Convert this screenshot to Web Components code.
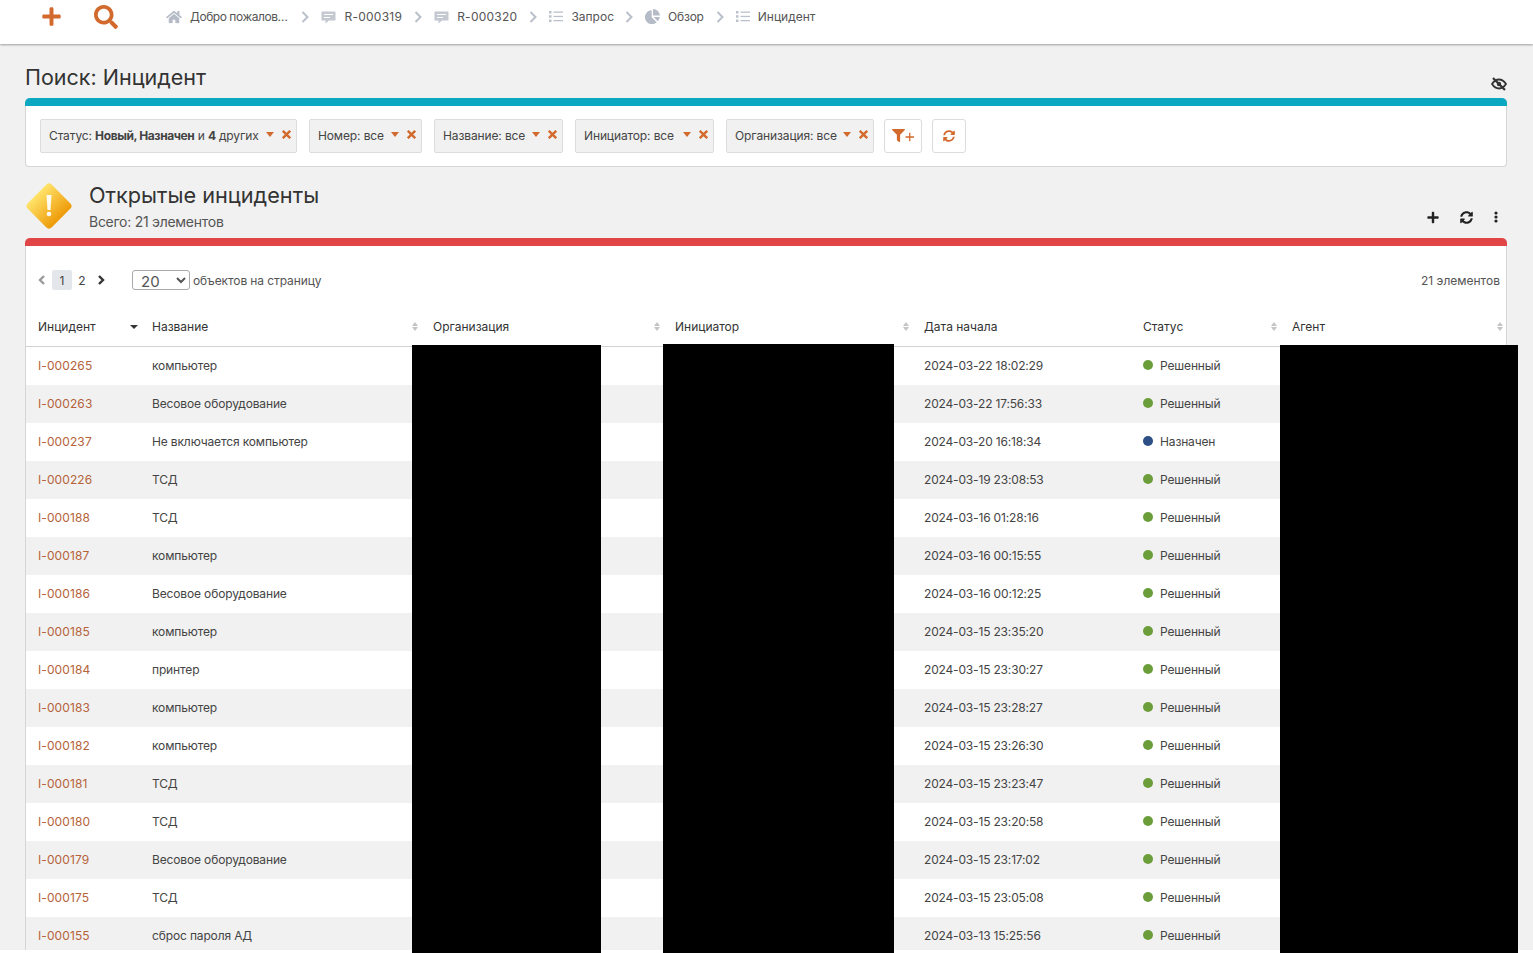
<!DOCTYPE html>
<html lang="ru"><head><meta charset="utf-8"><title>Поиск: Инцидент</title>
<style>
html,body{margin:0;padding:0;background:#fff;height:953px;overflow:hidden}
body{font-family:"Inter","Noto Sans",sans-serif;color:#3c3c3c}
</style></head><body>
<x-app></x-app>
<script>
const ORANGE='#d2692d';
const P={
plus:'<path d="M416 208H272V64c0-17.67-14.33-32-32-32h-32c-17.67 0-32 14.33-32 32v144H32c-17.67 0-32 14.33-32 32v32c0 17.67 14.33 32 32 32h144v144c0 17.67 14.33 32 32 32h32c17.67 0 32-14.33 32-32V304h144c17.67 0 32-14.33 32-32v-32c0-17.67-14.33-32-32-32z"/>',
search:'<path d="M505 442.7L405.3 343c-4.5-4.5-10.6-7-17-7H372c27.6-35.3 44-79.7 44-128C416 93.1 322.9 0 208 0S0 93.1 0 208s93.1 208 208 208c48.3 0 92.7-16.4 128-44v16.3c0 6.4 2.5 12.5 7 17l99.7 99.7c9.4 9.4 24.6 9.4 33.9 0l28.3-28.3c9.4-9.4 9.4-24.6.1-34zM208 336c-70.7 0-128-57.2-128-128 0-70.7 57.2-128 128-128 70.7 0 128 57.2 128 128 0 70.7-57.2 128-128 128z"/>',
home:'<path d="M280.37 148.26L96 300.11V464a16 16 0 0 0 16 16l112.06-.29a16 16 0 0 0 15.92-16V368a16 16 0 0 1 16-16h64a16 16 0 0 1 16 16v95.64a16 16 0 0 0 16 16.05L464 480a16 16 0 0 0 16-16V300L295.67 148.26a12.19 12.19 0 0 0-15.3 0zM571.6 251.47L488 182.56V44.05a12 12 0 0 0-12-12h-56a12 12 0 0 0-12 12v72.61L318.47 43a48 48 0 0 0-61 0L4.34 251.47a12 12 0 0 0-1.6 16.9l25.5 31A12 12 0 0 0 45.15 301l235.22-193.74a12.19 12.19 0 0 1 15.3 0L530.9 301a12 12 0 0 0 16.9-1.6l25.5-31a12 12 0 0 0-1.7-16.93z"/>',
sync:'<path d="M370.72 133.28C339.458 104.008 298.888 87.962 255.848 88c-77.458.068-144.328 53.178-162.791 126.85-1.344 5.363-6.122 9.15-11.651 9.15H24.103c-7.498 0-13.194-6.807-11.807-14.176C33.933 94.924 134.813 8 256 8c66.448 0 126.791 26.136 171.315 68.685L463.03 40.97C478.149 25.851 504 36.559 504 57.941V192c0 13.255-10.745 24-24 24H345.941c-21.382 0-32.09-25.851-16.971-40.971l41.75-41.749zM32 296h134.059c21.382 0 32.09 25.851 16.971 40.971l-41.75 41.75c31.262 29.273 71.835 45.319 114.876 45.28 77.418-.07 144.315-53.144 162.787-126.849 1.344-5.363 6.122-9.15 11.651-9.15h57.304c7.498 0 13.194 6.807 11.807 14.176C478.067 417.076 377.187 504 256 504c-66.448 0-126.791-26.136-171.315-68.685L48.97 471.03C33.851 486.149 8 475.441 8 454.059V320c0-13.255 10.745-24 24-24z"/>',
filter:'<path d="M487.976 0H24.028C2.71 0-8.047 25.866 7.058 40.971L192 225.941V432c0 7.831 3.821 15.17 10.237 19.662l80 55.98C298.02 518.69 320 507.493 320 487.98V225.941l184.947-184.97C520.021 25.896 509.338 0 487.976 0z"/>',
};
function ic(name,w,h,color,vb){return `<svg width="${w}" height="${h}" viewBox="${vb||'0 0 512 512'}" fill="${color}" style="display:block;flex:none">${P[name]}</svg>`}
const chev=`<svg width="8" height="12" viewBox="0 0 8 12" fill="none" stroke="#b9c0cb" stroke-width="2" style="display:block;flex:none"><path d="M1.5 1l5 5-5 5"/></svg>`;
const ICONS={
home:`<svg width="16" height="14" viewBox="0 0 576 512" fill="#b6bcc7" style="display:block">${P.home}</svg>`,
comment:`<svg width="15" height="14" viewBox="0 0 15 14" style="display:block"><path fill="#c3c8d1" d="M1 1.500h13a.5.5 0 0 1 .5.5v8a.5.5 0 0 1-.5.5H8L4.500 13.500v-3H1a.5.5 0 0 1-.5-.5V2a.5.5 0 0 1 .5-.5z"/><path stroke="#fff" stroke-width="1" d="M3 4.500h9M3 7.500h6"/></svg>`,
list:`<svg width="14" height="13" viewBox="0 0 14 13" style="display:block" fill="#bcc2cc"><rect x="0" y="1" width="2.500" height="2.500"/><rect x="0" y="5.200" width="2.500" height="2.500"/><rect x="0" y="9.500" width="2.500" height="2.500"/><rect x="4.500" y="1.500" width="9.500" height="1.300"/><rect x="4.500" y="5.800" width="9.500" height="1.300"/><rect x="4.500" y="10" width="9.500" height="1.300"/></svg>`,
pie:`<svg width="15" height="15" viewBox="0 0 15 15" style="display:block" fill="#b6bcc7"><path d="M6.700 1.200v7.100l5 5A7 7 0 1 1 6.700 1.200z"/><path d="M8 0a7 7 0 0 1 7 6.600H8z"/><path d="M8.600 8h6.300a7 7 0 0 1-2.200 4.200z"/></svg>`
};
function def(name,css,html){
 customElements.define(name,class extends HTMLElement{
  constructor(){super();const r=this.attachShadow({mode:'open'});r.innerHTML=`<style>${css}</style>`+(typeof html==='function'?html(this):html);}
 });
}
def('x-crumb',`:host{display:flex;align-items:center;gap:8px;font-size:12px;color:#555}
.i{display:flex;align-items:center;justify-content:center}`,
 el=>`<span class="i">${ICONS[el.getAttribute('icon')]}</span><slot></slot>`);
def('x-topbar',`:host{display:flex;align-items:center;height:44px;background:#fff;box-shadow:0 1px 2px rgba(0,0,0,.35);position:relative;z-index:1;box-sizing:border-box;padding:0 0 11px 41px}
.add{margin-right:32px}.find{margin-right:48px}
nav{display:flex;align-items:center}
.sep{margin:0 12px}
.w{letter-spacing:-.45px;margin-right:2px}.d{letter-spacing:.25px}.q{margin-right:-1px}.o{letter-spacing:-.2px}`,
 ()=>{const c=[['home','Добро пожалов…','w'],['comment','R-000319','d'],['comment','R-000320','d'],['list','Запрос','q'],['pie','Обзор','o'],['list','Инцидент','']];
 return `<span class="add">${ic('plus',21,21,ORANGE,'0 0 448 512')}</span><span class="find">${ic('search',24,24,ORANGE)}</span><nav>`+c.map((x,i)=>(i?`<span class="sep">${chev}</span>`:'')+`<x-crumb icon="${x[0]}"><span class="${x[2]}">${x[1]}</span></x-crumb>`).join('')+`</nav>`});
def('x-chip',`:host{display:flex;align-items:center;height:34px;box-sizing:border-box;background:#f1f1f1;border:1px solid #dcdcdc;border-radius:2px;padding:0 5px 1px 8px;font-size:12px;color:#444;white-space:nowrap;letter-spacing:-.12px}
.c{width:0;height:0;border:4px solid transparent;border-top:5px solid ${ORANGE};border-bottom:0;margin:-3px 8px 0 auto}
.x{display:block;margin-top:-3px;flex:none}`,
 `<slot></slot><span class="c"></span><svg class="x" width="9" height="9" viewBox="0 0 9 9" stroke="${ORANGE}" stroke-width="2.400" fill="none"><path d="M.8.8l7.400 7.400M8.200.8L.8 8.200"/></svg>`);
def('x-iconbtn',`:host{display:flex;align-items:center;justify-content:center;height:34px;box-sizing:border-box;background:#fff;border:1px solid #dcdcdc;border-radius:3px}`,`<slot></slot>`);
def('x-panel',`:host{display:block;background:#fff;border:1px solid #d5d5d5;border-top:0;border-radius:5px 5px 4px 4px;box-sizing:border-box;margin:0 26px 0 25px}
.bar{height:8px;margin:0 -1px;border-radius:5px 5px 0 0;background:var(--bar)}`,`<div class="bar"></div><slot></slot>`);
def('x-filters',`:host{display:flex;gap:12px;padding:13px 14px;height:34px}
b{letter-spacing:-.4px}`,
 ()=>`<x-chip style="width:257px"><span>Статус: <b>Новый, Назначен</b> и <b>4</b> других</span></x-chip>
 <x-chip style="width:113px"><span>Номер: все</span></x-chip>
 <x-chip style="width:129px"><span>Название: все</span></x-chip>
 <x-chip style="width:139px"><span>Инициатор: все</span></x-chip>
 <x-chip style="width:148px"><span>Организация: все</span></x-chip>
 <x-iconbtn style="width:38px;margin-left:-2px"><svg width="22" height="14" viewBox="0 0 22 14" style="display:block"><svg width="13" height="13" viewBox="0 0 512 512" fill="${ORANGE}">${P.filter}</svg><path d="M13.500 8h8.500M17.750 3.750v8.500" stroke="${ORANGE}" stroke-width="1.300" fill="none"/></svg></x-iconbtn>
 <x-iconbtn style="width:34px;margin-left:-2px">${ic('sync',12,12,ORANGE)}</x-iconbtn>`);
def('x-sort',`:host{display:block;width:7px;margin-left:auto}
i{display:block;width:0;height:0;border:3.500px solid transparent}
.u{border-top:0;border-bottom:4px solid #c4c4c4;margin-bottom:1px}.d{border-bottom:0;border-top:4px solid #c4c4c4}`,`<i class="u"></i><i class="d"></i>`);
const DATA=[['I-000265','компьютер','2024-03-22 18:02:29','r'],['I-000263','Весовое оборудование','2024-03-22 17:56:33','r'],['I-000237','Не включается компьютер','2024-03-20 16:18:34','n'],['I-000226','ТСД','2024-03-19 23:08:53','r'],['I-000188','ТСД','2024-03-16 01:28:16','r'],['I-000187','компьютер','2024-03-16 00:15:55','r'],['I-000186','Весовое оборудование','2024-03-16 00:12:25','r'],['I-000185','компьютер','2024-03-15 23:35:20','r'],['I-000184','принтер','2024-03-15 23:30:27','r'],['I-000183','компьютер','2024-03-15 23:28:27','r'],['I-000182','компьютер','2024-03-15 23:26:30','r'],['I-000181','ТСД','2024-03-15 23:23:47','r'],['I-000180','ТСД','2024-03-15 23:20:58','r'],['I-000179','Весовое оборудование','2024-03-15 23:17:02','r'],['I-000175','ТСД','2024-03-15 23:05:08','r'],['I-000155','сброс пароля АД','2024-03-13 15:25:56','r']];
def('x-table',`:host{display:block;font-size:12px}
.r{display:grid;grid-template-columns:114px 281px 242px 249px 219px 149px 1fr;height:38px;align-items:center;box-sizing:border-box}
.r>*{padding:0 2px 0 12px;display:flex;align-items:center;min-width:0;white-space:nowrap}
.h{height:39px;border-bottom:1px solid #d3d3d3;color:#333;padding-bottom:1px}
.b{padding-bottom:2px}
.b:nth-child(even){background:#f1f1f1}
a{color:#b5623a;text-decoration:none;letter-spacing:.1px}
.t{color:#444;letter-spacing:-.14px}
.ds{letter-spacing:-.17px}
.dot{width:10px;height:10px;border-radius:50%;margin-right:7px;flex:none}
.caret{width:0;height:0;border:4px solid transparent;border-top:4px solid #333;border-bottom:0;margin-left:auto}`,
 ()=>`<div class="r h"><div>Инцидент<i class="caret"></i></div>${['Название','Организация','Инициатор'].map(t=>`<div>${t}<x-sort></x-sort></div>`).join('')}<div>Дата начала</div>${['Статус','Агент'].map(t=>`<div>${t}<x-sort></x-sort></div>`).join('')}</div><div>`+
 DATA.map(d=>`<div class="r b"><div><a href="#">${d[0]}</a></div><div class="t">${d[1]}</div><div></div><div></div><div class="t ds">${d[2]}</div><div class="t"><span class="dot" style="background:${d[3]=='r'?'#6b9e3a':'#2d4f85'}"></span>${d[3]=='r'?'Решенный':'Назначен'}</div><div></div></div>`).join('')+`</div>`);
def('x-pager',`:host{display:flex;align-items:center;height:62px;box-sizing:border-box;padding:6px 6px 0 12px;font-size:12px;color:#555}
.n{display:flex;align-items:center;justify-content:center;width:20px;height:20px;color:#444;border-radius:2px;font-size:12px}
.on{background:#e3e6ea}
select{appearance:auto;font:15px "Inter",sans-serif;color:#555;width:58px;height:20px;background:#fff;border:1px solid #aaa;border-radius:3px;padding:0 0 2px 4px;margin:0 3px 0 27px}
.l{letter-spacing:-.1px}
.e{margin-left:auto}`,
 `<svg width="8" height="10" viewBox="0 0 8 10" fill="none" stroke="#9a9a9a" stroke-width="2.400" style="margin-right:6px"><path d="M6 1L2 5l4 4"/></svg><span class="n on">1</span><span class="n">2</span><svg width="8" height="10" viewBox="0 0 8 10" fill="none" stroke="#333" stroke-width="2.400" style="margin-left:5px"><path d="M2 1l4 4-4 4"/></svg><select><option>20</option></select><span class="l">объектов на страницу</span><span class="e">21 элементов</span>`);
def('x-app',`:host{display:block;height:953px;overflow:hidden;position:relative;background:#fff}
.page{height:950px;background:#f1f1f1;overflow:hidden}
.title{display:flex;justify-content:space-between;margin:0 26px 0 25px;height:54px;align-items:flex-end}
h1{font:400 21.500px "Inter",sans-serif;color:#333;margin:0;padding:0 0 8px;line-height:26px}
.eye{margin:0 0 7px;display:block}
.head{display:flex;height:71px;margin:0 26px 0 25px;align-items:stretch;box-sizing:border-box}
.ttl{margin-left:16px;padding-top:15px}
h2{font:400 21.700px/26px "Inter",sans-serif;color:#333;margin:0}
.sub{font-size:14px;color:#555;line-height:20px;margin-top:4px;letter-spacing:-.27px}
.tools{margin-left:auto;display:flex;align-items:center;gap:21px;height:20px;align-self:flex-end;margin-bottom:11px;padding-right:9px}
.mask{position:absolute;background:#000;bottom:0}
.diamond{margin:15px 0 0 0}`,
 ()=>`<div class="page"><x-topbar></x-topbar>
 <div class="title"><h1>Поиск: Инцидент</h1>
 <svg class="eye" width="16" height="14" viewBox="0 0 16 14" fill="none" stroke="#333" style="display:block"><path d="M1 7c2-3 4.300-4.500 7-4.500S13 4 15 7c-2 3-4.300 4.500-7 4.500S3 10 1 7z" stroke-width="1.800"/><circle cx="8" cy="7" r="2.200" fill="#333" stroke="none"/><path d="M2 1l12 12" stroke-width="2.200"/></svg></div>
 <x-panel style="--bar:#0ca8c1;height:69px"><x-filters></x-filters></x-panel>
 <div class="head">
 <svg class="diamond" width="48" height="48" viewBox="0 0 48 48" style="flex:none"><defs><linearGradient id="g" x1="0" y1=".5" x2="1" y2=".5"><stop offset="0" stop-color="#ffe36a"/><stop offset="1" stop-color="#ee9a08"/></linearGradient></defs><rect x="7" y="7" width="34" height="34" rx="4" transform="rotate(45 24 24)" fill="url(#g)"/><path d="M21.500 13h5l-1 15h-3z" fill="#fff" opacity=".92"/><circle cx="24" cy="32" r="2.300" fill="#fff" opacity=".92"/></svg>
 <div class="ttl"><h2>Открытые инциденты</h2><div class="sub">Всего: 21 элементов</div></div>
 <div class="tools">${ic('plus',12,13,'#222','0 0 448 512')}${ic('sync',13,13,'#222')}<svg width="4" height="12" viewBox="0 0 4 12" fill="#222"><circle cx="2" cy="2" r="1.600"/><circle cx="2" cy="6" r="1.600"/><circle cx="2" cy="10" r="1.600"/></svg></div>
 </div>
 <x-panel style="--bar:#e24545;height:800px;border-bottom:0"><x-pager></x-pager><x-table></x-table></x-panel></div>
 <div class="mask" style="left:412px;width:189px;top:345px"></div>
 <div class="mask" style="left:663px;width:231px;top:344px"></div>
 <div class="mask" style="left:1280px;width:238px;top:345px"></div>`);
</script></body></html>
